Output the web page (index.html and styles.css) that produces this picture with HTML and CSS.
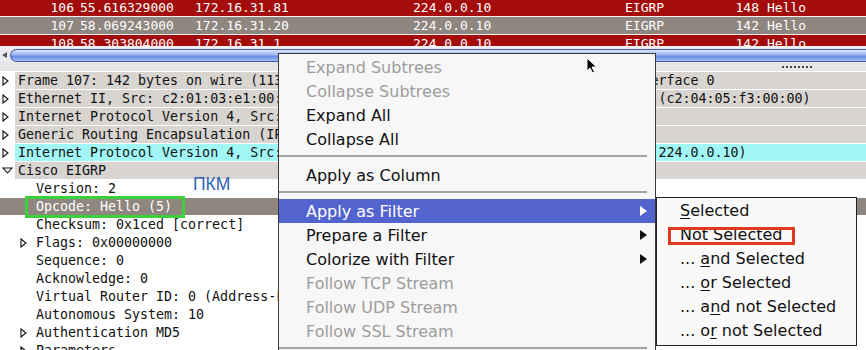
FILE: index.html
```html
<!DOCTYPE html>
<html lang="ru">
<head>
    <meta charset="UTF-8">
    <title>Wireshark - Apply as Filter</title>
    <link rel="stylesheet" href="styles.css">
</head>
<body>
    <div class="screen">
        <!-- Packet list -->
        <div class="packet-list">
            <div class="packet red first">
                <span class="c-no">106</span><span class="c-time">55.616329000</span><span class="c-src">172.16.31.81</span><span class="c-dst">224.0.0.10</span><span class="c-proto">EIGRP</span><span class="c-len">148</span><span class="c-info">Hello</span>
            </div>
            <div class="packet grey">
                <span class="c-no">107</span><span class="c-time">58.069243000</span><span class="c-src">172.16.31.20</span><span class="c-dst">224.0.0.10</span><span class="c-proto">EIGRP</span><span class="c-len">142</span><span class="c-info">Hello</span>
            </div>
            <div class="packet red">
                <span class="c-no">108</span><span class="c-time">58.303804000</span><span class="c-src">172.16.31.1</span><span class="c-dst">224.0.0.10</span><span class="c-proto">EIGRP</span><span class="c-len">142</span><span class="c-info">Hello</span>
            </div>
        </div>

        <!-- Horizontal scrollbar + splitter -->
        <div class="hscroll">
            <span class="hscroll-arrow"></span>
            <div class="hscroll-thumb"></div>
        </div>
        <div class="splitter"><span class="grip"></span></div>

        <!-- Packet details tree -->
        <div class="tree">
            <div class="node">
                <span class="exp"><svg width="7" height="10" viewBox="0 0 7 10"><path d="M1 1 L6 5 L1 9 Z" fill="none" stroke="#111" stroke-width="1.1"/></svg></span>
                <span class="label">Frame 107: 142 bytes on wire (1136 bits), 142 bytes captured (1136 bits) on interface 0</span>
            </div>
            <div class="node">
                <span class="exp"><svg width="7" height="10" viewBox="0 0 7 10"><path d="M1 1 L6 5 L1 9 Z" fill="none" stroke="#111" stroke-width="1.1"/></svg></span>
                <span class="label">Ethernet II, Src: c2:01:03:e1:00:00 (c2:01:03:e1:00:00), Dst: c2:04:05:f3:00:00 (c2:04:05:f3:00:00)</span>
            </div>
            <div class="node">
                <span class="exp"><svg width="7" height="10" viewBox="0 0 7 10"><path d="M1 1 L6 5 L1 9 Z" fill="none" stroke="#111" stroke-width="1.1"/></svg></span>
                <span class="label">Internet Protocol Version 4, Src: 10.1.1.1 (10.1.1.1), Dst: 10.1.1.2 (10.1.1.2)</span>
            </div>
            <div class="node">
                <span class="exp"><svg width="7" height="10" viewBox="0 0 7 10"><path d="M1 1 L6 5 L1 9 Z" fill="none" stroke="#111" stroke-width="1.1"/></svg></span>
                <span class="label">Generic Routing Encapsulation (IP)</span>
            </div>
            <div class="node cyan">
                <span class="exp"><svg width="7" height="10" viewBox="0 0 7 10"><path d="M1 1 L6 5 L1 9 Z" fill="none" stroke="#111" stroke-width="1.1"/></svg></span>
                <span class="label">Internet Protocol Version 4, Src: 172.16.31.20 (172.16.31.20), Dst: 224.0.0.10 (224.0.0.10)</span>
            </div>
            <div class="node">
                <span class="exp"><svg width="11" height="7" viewBox="0 0 11 7"><path d="M1 1 L10 1 L5.5 6 Z" fill="none" stroke="#111" stroke-width="1.1"/></svg></span>
                <span class="label">Cisco EIGRP</span>
            </div>
            <div class="node child">
                <span class="exp"></span>
                <span class="label">Version: 2</span>
            </div>
            <div class="node child selected">
                <span class="exp"></span>
                <span class="label">Opcode: Hello (5)</span>
            </div>
            <div class="node child">
                <span class="exp"></span>
                <span class="label">Checksum: 0x1ced [correct]</span>
            </div>
            <div class="node child">
                <span class="exp"><svg width="7" height="10" viewBox="0 0 7 10"><path d="M1 1 L6 5 L1 9 Z" fill="none" stroke="#111" stroke-width="1.1"/></svg></span>
                <span class="label">Flags: 0x00000000</span>
            </div>
            <div class="node child">
                <span class="exp"></span>
                <span class="label">Sequence: 0</span>
            </div>
            <div class="node child">
                <span class="exp"></span>
                <span class="label">Acknowledge: 0</span>
            </div>
            <div class="node child">
                <span class="exp"></span>
                <span class="label">Virtual Router ID: 0 (Address-Family)</span>
            </div>
            <div class="node child">
                <span class="exp"></span>
                <span class="label">Autonomous System: 10</span>
            </div>
            <div class="node child">
                <span class="exp"><svg width="7" height="10" viewBox="0 0 7 10"><path d="M1 1 L6 5 L1 9 Z" fill="none" stroke="#111" stroke-width="1.1"/></svg></span>
                <span class="label">Authentication MD5</span>
            </div>
            <div class="node child">
                <span class="exp"><svg width="7" height="10" viewBox="0 0 7 10"><path d="M1 1 L6 5 L1 9 Z" fill="none" stroke="#111" stroke-width="1.1"/></svg></span>
                <span class="label">Parameters</span>
            </div>

            <!-- annotations -->
            <span class="note-pkm">ПКМ</span>
            <span class="note-green"></span>
        </div>

        <!-- Context menu -->
        <div class="menu">
            <div class="item disabled">Expand Subtrees</div>
            <div class="item disabled">Collapse Subtrees</div>
            <div class="item">Expand All</div>
            <div class="item">Collapse All</div>
            <div class="sep"></div>
            <div class="item">Apply as Column</div>
            <div class="sep"></div>
            <div class="item active">Apply as Filter<span class="arrow"></span></div>
            <div class="item">Prepare a Filter<span class="arrow"></span></div>
            <div class="item">Colorize with Filter<span class="arrow"></span></div>
            <div class="item disabled">Follow TCP Stream</div>
            <div class="item disabled">Follow UDP Stream</div>
            <div class="item disabled">Follow SSL Stream</div>
            <div class="sep"></div>
        </div>

        <!-- Submenu -->
        <div class="submenu">
            <div class="sub-item"><u>S</u>elected</div>
            <div class="sub-item"><u>N</u>ot Selected<span class="note-red"></span></div>
            <div class="sub-item">... <u>a</u>nd Selected</div>
            <div class="sub-item">... <u>o</u>r Selected</div>
            <div class="sub-item">... a<u>n</u>d not Selected</div>
            <div class="sub-item">... o<u>r</u> not Selected</div>
        </div>

        <!-- Mouse pointer -->
        <svg class="cursor" width="12" height="17" viewBox="0 0 12 17">
            <path d="M1 1 L1 14 L4 11 L6.5 16 L8.5 15 L6 10 L10.5 10 Z" fill="#000" stroke="#fff" stroke-width="1"/>
        </svg>
    </div>
</body>
</html>
```

FILE: styles.css
```css
/* General */
body {
    margin: 0;
    background: #fff;
}

.screen {
    position: relative;
    width: 866px;
    height: 350px;
    overflow: hidden;
    background: #fff;
}

/* Packet list */
.packet-list {
    height: 46px;
    overflow: hidden;
    font-family: "DejaVu Sans Mono", monospace;
    font-size: 13px;
    color: #fff;
}

.packet {
    display: flex;
    height: 17px;
    line-height: 17px;
    border-bottom: 1px solid #f4eeee;
    white-space: nowrap;
}

.packet.first {
    margin-top: -1px;
}

.packet.red {
    background: #a30c0a;
}

.packet.grey {
    background: #8f8680;
}

.c-no { width: 74px; text-align: right; }
.c-time { width: 115px; margin-left: 6px; }
.c-src { width: 218px; }
.c-dst { width: 212px; }
.c-proto { width: 86px; }
.c-len { width: 48px; text-align: right; }
.c-info { padding-left: 8px; }

/* Scrollbar */
.hscroll {
    display: flex;
    align-items: center;
    height: 16px;
    background: #ecebf3;
    border-top: 2px solid #f6f2f6;
    box-sizing: border-box;
}

.hscroll-arrow {
    width: 0;
    height: 0;
    margin: 0 3px 0 2px;
    border-top: 3px solid transparent;
    border-bottom: 3px solid transparent;
    border-right: 5px solid #555;
}

.hscroll-thumb {
    flex: 1;
    height: 13px;
    border: 1px solid #3d5ca8;
    border-right: none;
    border-radius: 7px 0 0 7px;
    box-sizing: border-box;
    background: linear-gradient(#dce6fb, #9fb8f2 40%, #6b8de6 60%, #a6bef4);
}

.splitter {
    display: flex;
    justify-content: flex-end;
    align-items: center;
    height: 9px;
    background: #e7e6e6;
    border-bottom: 1px solid #fff;
}

.grip {
    width: 30px;
    margin-right: 54px;
    border-top: 2px dotted #444;
}

/* Packet details */
.tree {
    position: relative;
    font-family: "DejaVu Sans Mono", monospace;
    font-size: 13.3px;
    color: #111;
}

.node {
    display: flex;
    height: 17px;
    line-height: 17px;
    border-bottom: 1px solid #fff;
    white-space: nowrap;
}

.node .exp {
    flex: none;
    display: flex;
    align-items: center;
    width: 15px;
    padding-left: 2px;
    box-sizing: border-box;
}

.node .label {
    flex: 1;
    padding-left: 3px;
    overflow: hidden;
    background: #d8d4d0;
}

.node.cyan .label {
    background: #a1f6f6;
}

.node.child {
    padding-left: 15px;
}

.node.child .exp {
    width: 18px;
    padding-left: 5px;
}

.node.child .label {
    background: transparent;
}

.node.selected {
    background: #8f8680;
    color: #fff;
}

.note-pkm {
    position: absolute;
    left: 193px;
    top: 103px;
    font-family: "Liberation Sans", Arial, sans-serif;
    font-size: 17.5px;
    line-height: 18px;
    color: #2e62b6;
}

.note-green {
    position: absolute;
    left: 25px;
    top: 124px;
    width: 160px;
    height: 22px;
    border: 3px solid #3dd03d;
    box-sizing: border-box;
}

/* Context menu */
.menu,
.submenu {
    position: absolute;
    font-family: "DejaVu Sans", sans-serif;
    font-size: 16px;
    color: #111;
    background: #f7f7f7;
    border: 1px solid #3a3a3a;
    box-sizing: border-box;
}

.menu {
    left: 278px;
    top: 53px;
    width: 378px;
    height: 320px;
    padding-top: 1px;
}

.item {
    display: flex;
    justify-content: space-between;
    align-items: center;
    height: 24px;
    padding: 0 8px 0 27px;
    white-space: nowrap;
}

.item.disabled {
    color: #9d9d9d;
}

.item.active {
    background: #5364cf;
    color: #fff;
}

.arrow {
    width: 0;
    height: 0;
    border-top: 5px solid transparent;
    border-bottom: 5px solid transparent;
    border-left: 7px solid #111;
}

.item.active .arrow {
    border-left-color: #fff;
}

.sep {
    height: 12px;
    box-sizing: border-box;
    padding-top: 4px;
    margin-right: 8px;
}

.sep::before {
    content: "";
    display: block;
    height: 2px;
    background: #a3a3a3;
}

/* Submenu */
.submenu {
    left: 656px;
    top: 197px;
    width: 201px;
    padding: 1px 0 2px;
    background: #f9f9f9;
    border-color: #222;
}

.sub-item {
    position: relative;
    height: 24px;
    line-height: 24px;
    padding-left: 23px;
    white-space: pre;
}

.sub-item u {
    text-decoration-thickness: 1px;
    text-underline-offset: 2px;
}

.note-red {
    position: absolute;
    left: 11px;
    top: 4px;
    width: 127px;
    height: 18px;
    border: 3px solid #df3a1d;
    box-sizing: border-box;
}

/* Mouse pointer */
.cursor {
    position: absolute;
    left: 586px;
    top: 57px;
}
```
